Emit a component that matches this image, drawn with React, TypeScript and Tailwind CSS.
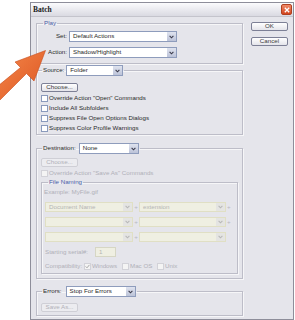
import React from "react";

function Chevron({ color }: { color: string }) {
  return (
    <svg width="5" height="4" viewBox="0 0 5 4">
      <path d="M0.6 0.8 L2.5 2.8 L4.4 0.8" fill="none" stroke={color} strokeWidth="1.1" />
    </svg>
  );
}

function Sel({ w, h, text, disabled }: { w: string; h: string; text: string; disabled?: boolean }) {
  return (
    <div
      className={`flex ${w} ${h} border ${
        disabled ? "border-[#e0dfc4] bg-[#efefe2]" : "border-[#8e9cbc] bg-white"
      }`}
    >
      <div
        className={`flex-1 flex items-center pl-[3px] text-[6.2px] leading-none ${
          disabled ? "text-[#b4b4b4]" : "text-[#2a2a2a]"
        }`}
      >
        {text}
      </div>
      <div
        className={`w-[9px] flex items-center justify-center ${
          disabled ? "bg-[#e4e4e2]" : "bg-gradient-to-b from-[#dfe3ef] to-[#bcc3d8]"
        }`}
      >
        <Chevron color={disabled ? "#b8b8b8" : "#3a3a4a"} />
      </div>
    </div>
  );
}

function Btn({ label, disabled }: { label: string; disabled?: boolean }) {
  return (
    <div
      className={`w-[37px] h-[9px] rounded-[2px] border flex items-center justify-center text-[6.2px] leading-none ${
        disabled
          ? "border-[#cfcfd6] bg-[#ececf0] text-[#b0b0b8]"
          : "border-[#7d8096] bg-gradient-to-b from-white to-[#e4e4ea] text-[#3a3a3a]"
      }`}
    >
      {label}
    </div>
  );
}

function Check({ label, disabled, checked }: { label: string; disabled?: boolean; checked?: boolean }) {
  return (
    <div className="flex items-center h-[10px]">
      <div
        className={`w-[7px] h-[7px] border flex items-center justify-center ${
          disabled ? "border-[#d2d2d8] bg-[#f4f4f4]" : "border-[#8a9abc] bg-white"
        }`}
      >
        {checked && (
          <svg width="5" height="5" viewBox="0 0 5 5">
            <path d="M0.6 2.4 L2 3.8 L4.4 0.9" fill="none" stroke="#a8a8a8" strokeWidth="1" />
          </svg>
        )}
      </div>
      <span
        className={`ml-[1px] text-[6.2px] leading-none ${disabled ? "text-[#b0b0b8]" : "text-[#2a2a2a]"}`}
      >
        {label}
      </span>
    </div>
  );
}

const box = "border border-[#bdbdc8] shadow-[inset_1px_1px_0_#f6f6f8,1px_1px_0_#f6f6f8]";

export default function App() {
  return (
    <div className="relative w-[295px] h-[320px] bg-white overflow-hidden font-['Liberation_Sans',Arial,sans-serif]">
      <div className="ml-[30px] mt-[2px] w-[264px] h-[318px] border border-[#8e8e9a] bg-[#e5e5eb] flex flex-col">
        {/* Title bar */}
        <div className="h-[14px] flex items-center justify-between pl-[2px] pr-[1px] bg-gradient-to-b from-[#fbfbfd] to-[#dadae2] border-b border-[#c4c4cc]">
          <span className="text-[7.5px] font-bold leading-none text-[#1a1a1a] font-['Liberation_Serif',serif]">
            Batch
          </span>
          <div className="w-[11px] h-[11px] rounded-[2px] border border-[#b04020] bg-gradient-to-b from-[#f08a68] to-[#d2441c] flex items-center justify-center">
            <svg width="6" height="6" viewBox="0 0 6 6">
              <path d="M0.8 0.8 L5.2 5.2 M5.2 0.8 L0.8 5.2" stroke="white" strokeWidth="1.3" />
            </svg>
          </div>
        </div>

        {/* Body */}
        <div className="flex pl-[5px] pt-[2px]">
          {/* Left column */}
          <div className="w-[207px] flex flex-col">
            {/* Play */}
            <fieldset className={`${box} pb-[5px]`}>
              <legend className="ml-[6px] px-[1px] text-[6.2px] leading-[8px] text-[#4a5ca6]">Play</legend>
              <div className="flex items-center mt-[4px]">
                <div className="w-[32px] pr-[2px] text-right text-[6.2px] leading-none text-[#2a2a2a]">Set:</div>
                <Sel w="w-[108px]" h="h-[11px]" text="Default Actions" />
              </div>
              <div className="flex items-center mt-[5px]">
                <div className="w-[32px] pr-[2px] text-right text-[6.2px] leading-none text-[#2a2a2a]">Action:</div>
                <Sel w="w-[108px]" h="h-[11px]" text="Shadow/Highlight" />
              </div>
            </fieldset>

            {/* Source */}
            <fieldset className={`${box} mt-[1px] pb-[1px]`}>
              <legend className="ml-[5px] px-[1px]">
                <div className="flex items-center gap-[2px]">
                  <span className="text-[6.2px] leading-none text-[#2a2a2a]">Source:</span>
                  <Sel w="w-[57px]" h="h-[11px]" text="Folder" />
                </div>
              </legend>
              <div className="ml-[4px] mt-[7px]">
                <Btn label="Choose..." />
              </div>
              <div className="ml-[4px] mt-[1px] flex flex-col">
                <Check label={'Override Action "Open" Commands'} />
                <Check label="Include All Subfolders" />
                <Check label="Suppress File Open Options Dialogs" />
                <Check label="Suppress Color Profile Warnings" />
              </div>
            </fieldset>

            {/* Destination */}
            <fieldset className={`${box} mt-[8px] pb-[4px]`}>
              <legend className="ml-[5px] px-[1px]">
                <div className="flex items-center gap-[3px]">
                  <span className="text-[6.2px] leading-none text-[#2a2a2a]">Destination:</span>
                  <Sel w="w-[60px]" h="h-[11px]" text="None" />
                </div>
              </legend>
              <div className="ml-[4px] mt-[4px]">
                <Btn label="Choose..." disabled />
              </div>
              <div className="ml-[4px] mt-[1px]">
                <Check label={'Override Action "Save As" Commands'} disabled />
              </div>

              {/* File Naming */}
              <fieldset className={`${box} mx-[4px] pb-[2px]`}>
                <legend className="ml-[6px] px-[1px] text-[6.2px] leading-[8px] text-[#4a5ca6]">File Naming</legend>
                <div className="ml-[2px] mt-[2px] h-[8px] flex items-center text-[6.2px] leading-none text-[#b0b0b8]">
                  Example: MyFile.gif
                </div>
                <div className="ml-[3px] mt-[6px] flex items-center">
                  <Sel w="w-[88px]" h="h-[10px]" text="Document Name" disabled />
                  <span className="w-[6px] text-center text-[6.2px] leading-none text-[#b8b8c0]">+</span>
                  <Sel w="w-[87px]" h="h-[10px]" text="extension" disabled />
                  <span className="ml-[1px] text-[6.2px] leading-none text-[#b8b8c0]">+</span>
                </div>
                <div className="ml-[3px] mt-[5px] flex items-center">
                  <Sel w="w-[88px]" h="h-[10px]" text="" disabled />
                  <span className="w-[6px] text-center text-[6.2px] leading-none text-[#b8b8c0]">+</span>
                  <Sel w="w-[87px]" h="h-[10px]" text="" disabled />
                  <span className="ml-[1px] text-[6.2px] leading-none text-[#b8b8c0]">+</span>
                </div>
                <div className="ml-[3px] mt-[5px] flex items-center">
                  <Sel w="w-[88px]" h="h-[10px]" text="" disabled />
                  <span className="w-[6px] text-center text-[6.2px] leading-none text-[#b8b8c0]">+</span>
                  <Sel w="w-[87px]" h="h-[10px]" text="" disabled />
                </div>
                <div className="ml-[3px] mt-[5px] flex items-center">
                  <span className="w-[50px] text-[6.2px] leading-none text-[#b0b0b8]">Starting serial#:</span>
                  <div className="w-[21px] h-[10px] border border-[#d6d6c4] bg-[#efefe2] flex items-center pl-[3px] text-[6.2px] leading-none text-[#b4b4b4]">
                    1
                  </div>
                </div>
                <div className="ml-[3px] mt-[4px] h-[10px] flex items-center">
                  <span className="w-[39px] text-[6.2px] leading-none text-[#b0b0b8]">Compatibility:</span>
                  <div className="w-[38px]">
                    <Check label="Windows" disabled checked />
                  </div>
                  <div className="w-[35px]">
                    <Check label="Mac OS" disabled />
                  </div>
                  <Check label="Unix" disabled />
                </div>
              </fieldset>
            </fieldset>

            {/* Errors */}
            <fieldset className={`${box} mt-[7px] pb-[3px]`}>
              <legend className="ml-[5px] px-[1px]">
                <div className="flex items-center gap-[4px]">
                  <span className="text-[6.2px] leading-none text-[#2a2a2a]">Errors:</span>
                  <Sel w="w-[70px]" h="h-[11px]" text="Stop For Errors" />
                </div>
              </legend>
              <div className="ml-[4px] mt-[6px]">
                <Btn label="Save As..." disabled />
              </div>
            </fieldset>
          </div>

          {/* Right column */}
          <div className="ml-[8px] pt-[3px] flex flex-col gap-[6px]">
            <Btn label="OK" />
            <Btn label="Cancel" />
          </div>
        </div>
      </div>

      {/* Orange arrow */}
      <svg className="absolute left-0 top-0 pointer-events-none" width="60" height="110" viewBox="0 0 60 110">
        <defs>
          <linearGradient id="ag" x1="0" y1="0" x2="1" y2="1">
            <stop offset="0" stopColor="#f4874a" />
            <stop offset="1" stopColor="#dc5420" />
          </linearGradient>
        </defs>
        <polygon
          points="45.5,50.5 34,81 26.5,73.5 -2,102 -2,86 20.5,67.5 15,62"
          fill="url(#ag)"
          stroke="#c84d1c"
          strokeWidth="0.6"
          strokeLinejoin="round"
        />
      </svg>
    </div>
  );
}
